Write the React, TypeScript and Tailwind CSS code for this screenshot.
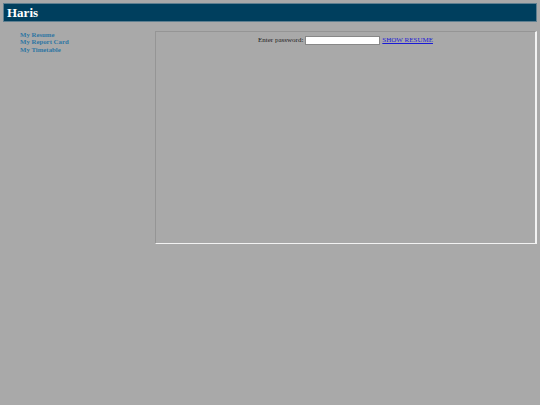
import React from "react";

const serif = { fontFamily: '"Liberation Serif", "Times New Roman", serif' };

const links = ["My Resume", "My Report Card", "My Timetable"];

const App = () => {
  return (
    <div className="w-[540px] h-[405px] bg-[#a9a9a9] pt-[3px] px-[3px]" style={serif}>
      <div className="h-[19px] bg-[#003f5e] border border-[#5f7f90] flex items-center pl-[3px]">
        <h1 className="text-white font-bold text-[13px] leading-none">Haris</h1>
      </div>
      <div className="flex mt-[9px]">
        <div className="w-[152px] pl-[17px] -mt-[0.5px] flex flex-col">
          {links.map((l) => (
            <a key={l} href="#" className="text-[#2f76a3] font-bold text-[6.8px] leading-[7.6px]">
              {l}
            </a>
          ))}
        </div>
        <div className="w-[382px] h-[213px] border border-t-[#959595] border-l-[#959595] border-b-[#f2f2f2] border-r-[#f2f2f2] border-r-2 flex justify-center items-start pt-[3px]">
          <div className="flex items-center gap-[2px] text-[7px] text-[#222]">
            <span>Enter password:</span>
            <input type="password" className="w-[75px] h-[9px] bg-white border border-[#888] outline-none" />
            <a href="#" className="text-[#1a1ad6] underline">SHOW RESUME</a>
          </div>
        </div>
      </div>
    </div>
  );
};

export default App;
